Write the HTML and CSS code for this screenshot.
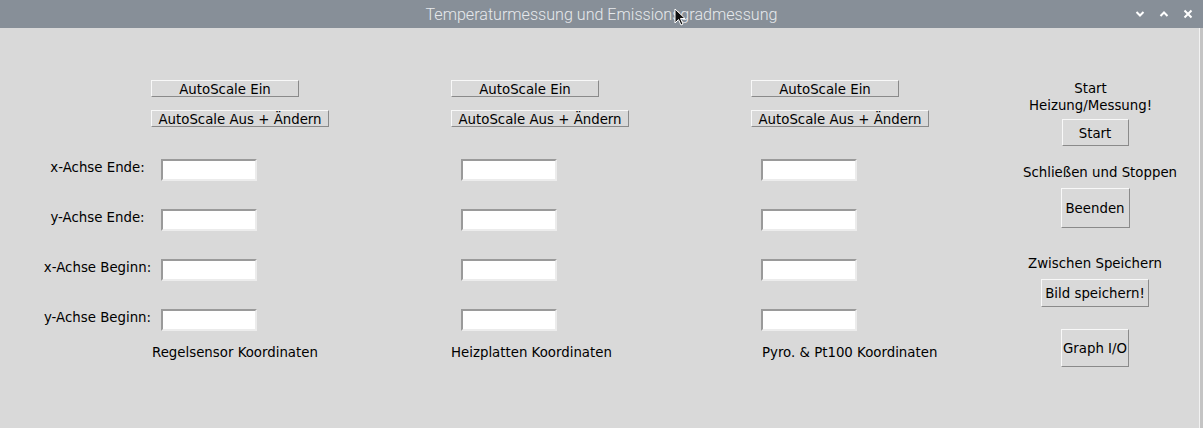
FILE: index.html
```html
<!DOCTYPE html>
<html lang="de">
<head>
<meta charset="utf-8">
<title>Temperaturmessung und Emissionsgradmessung</title>
<link rel="stylesheet" href="styles.css">
</head>
<body>
<div class="window">
  <header class="titlebar">
    <span class="title">Temperaturmessung und Emissionsgradmessung</span>
    <div class="controls">
      <svg class="ctl" width="10" height="8" viewBox="0 0 10 8"><path d="M1.5 2 L5 5.5 L8.5 2" fill="none" stroke="#fff" stroke-width="2"/></svg>
      <svg class="ctl" width="10" height="8" viewBox="0 0 10 8"><path d="M1.5 6 L5 2.5 L8.5 6" fill="none" stroke="#fff" stroke-width="2"/></svg>
      <svg class="ctl" width="10" height="10" viewBox="0 0 10 10"><path d="M1.5 1.5 L8.5 8.5 M8.5 1.5 L1.5 8.5" fill="none" stroke="#fff" stroke-width="2"/></svg>
    </div>
    <svg class="cursor" width="12" height="19" viewBox="0 0 12 19"><path d="M1 1 L1 15 L4.5 11.5 L7 17 L9 16 L6.5 10.5 L11 10.5 Z" fill="#111" stroke="#fff" stroke-width="1"/></svg>
  </header>
  <main class="content">
    <section class="grid">
      <button class="tkbtn w-ein r1 c2">AutoScale Ein</button>
      <button class="tkbtn w-ein r1 c3">AutoScale Ein</button>
      <button class="tkbtn w-ein r1 c4">AutoScale Ein</button>
      <button class="tkbtn w-aus r2 c2">AutoScale Aus + Ändern</button>
      <button class="tkbtn w-aus r2 c3">AutoScale Aus + Ändern</button>
      <button class="tkbtn w-aus r2 c4">AutoScale Aus + Ändern</button>

      <span class="lbl r3 c1">x-Achse Ende:</span>
      <input class="entry r3 c2" type="text">
      <input class="entry r3 c3" type="text">
      <input class="entry r3 c4" type="text">

      <span class="lbl r4 c1">y-Achse Ende:</span>
      <input class="entry r4 c2" type="text">
      <input class="entry r4 c3" type="text">
      <input class="entry r4 c4" type="text">

      <span class="lbl r5 c1">x-Achse Beginn:</span>
      <input class="entry r5 c2" type="text">
      <input class="entry r5 c3" type="text">
      <input class="entry r5 c4" type="text">

      <span class="lbl r6 c1">y-Achse Beginn:</span>
      <input class="entry r6 c2" type="text">
      <input class="entry r6 c3" type="text">
      <input class="entry r6 c4" type="text">

      <span class="cap r7 c2 cap-a">Regelsensor Koordinaten</span>
      <span class="cap r7 c3 cap-b">Heizplatten Koordinaten</span>
      <span class="cap r7 c4 cap-c">Pyro. &amp; Pt100 Koordinaten</span>
    </section>
    <aside class="side">
      <span class="slbl s-start">Start<br>Heizung/Messung!</span>
      <button class="tkbtn b-start">Start</button>
      <span class="slbl s-stop">Schließen und Stoppen</span>
      <button class="tkbtn b-end">Beenden</button>
      <span class="slbl s-save">Zwischen Speichern</span>
      <button class="tkbtn b-save">Bild speichern!</button>
      <button class="tkbtn b-graph">Graph I/O</button>
    </aside>
  </main>
</div>
</body>
</html>
```

FILE: styles.css
```css
* { box-sizing: border-box; }
html, body {
  margin: 0;
  padding: 0;
  width: 1203px;
  height: 428px;
  overflow: hidden;
  background: #d9d9d9;
}
body {
  font-family: "DejaVu Sans", sans-serif;
  font-size: 13.33px;
  color: #000;
}
.window {
  width: 1203px;
  height: 428px;
  display: flex;
  flex-direction: column;
  border-right: 3px solid #c4c4c4;
  position: relative;
}
.window::after {
  content: "";
  position: absolute;
  right: 0;
  top: 28px;
  bottom: 0;
  width: 1px;
  background: #f2f2f2;
}
.titlebar {
  height: 28px;
  flex: none;
  background: #878f98;
  display: flex;
  align-items: center;
  justify-content: center;
  position: relative;
  margin-right: -3px;
}
.title {
  font-family: Roboto, sans-serif;
  font-weight: 300;
  font-size: 16.1px;
  color: #e6e9ec;
}
.controls {
  position: absolute;
  right: 10px;
  top: 9px;
  display: flex;
  align-items: center;
  gap: 14px;
}
.cursor {
  position: absolute;
  left: 674px;
  top: 8px;
}
.content {
  flex: 1;
  display: flex;
  align-items: flex-start;
}
.grid {
  display: grid;
  padding-top: 52px;
  padding-left: 44px;
  grid-template-columns: 107px 300px 300px 259px;
  grid-template-rows: 30px 49px 50px 50px 50px 34px 20px;
  align-items: start;
}
.r1 { grid-row: 1; }
.r2 { grid-row: 2; }
.r3 { grid-row: 3; }
.r4 { grid-row: 4; }
.r5 { grid-row: 5; }
.r6 { grid-row: 6; }
.r7 { grid-row: 7; }
.c1 { grid-column: 1; }
.c2 { grid-column: 2; }
.c3 { grid-column: 3; }
.c4 { grid-column: 4; }

.tkbtn {
  font-family: "DejaVu Sans", sans-serif;
  font-size: 13.33px;
  line-height: 15px;
  color: #000;
  background: #d9d9d9;
  border: 1px solid;
  border-color: #f8f8f8 #8a8a8a #8a8a8a #f8f8f8;
  border-radius: 0;
  padding: 1px 0 0;
  margin: 0;
  text-align: center;
  white-space: nowrap;
}
.w-ein { width: 148px; height: 17px; }
.w-aus { width: 178px; height: 17px; }

.lbl {
  justify-self: center;
  line-height: 15px;
  margin-top: 1px;
  white-space: nowrap;
}
.entry {
  width: 96px;
  height: 22px;
  margin: 0 0 0 10px;
  padding: 0;
  background: #fff;
  border: 2px solid;
  border-color: #9a9a9a #ececec #ececec #9a9a9a;
  border-radius: 0;
  outline: none;
}
.cap {
  line-height: 17px;
  margin-top: 1px;
  white-space: nowrap;
}
.cap-a { margin-left: 1px; }
.cap-b { margin-left: 0; }
.cap-c { margin-left: 11px; }

.side {
  width: 170px;
  display: flex;
  flex-direction: column;
  align-items: center;
  padding-top: 52px;
}
.slbl {
  line-height: 17px;
  text-align: center;
  white-space: nowrap;
}
.s-start { margin-right: 9px; }
.b-start { width: 67px; height: 27px; margin-top: 5px; }
.s-stop { margin-top: 18px; margin-left: 10px; }
.b-end { width: 69px; height: 40px; margin-top: 7px; }
.s-save { margin-top: 27px; margin-left: 0; }
.b-save { width: 108px; height: 28px; margin-top: 7px; }
.b-graph { width: 68px; height: 38px; margin-top: 22px; }
```
